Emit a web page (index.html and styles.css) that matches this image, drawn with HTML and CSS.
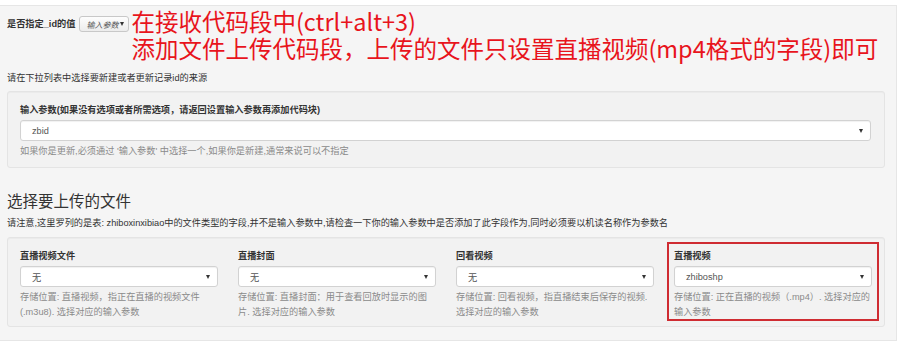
FILE: index.html
```html
<!DOCTYPE html>
<html lang="zh-CN">

<head>
    <meta charset="UTF-8">
    <title>文件上传设置</title>
    <link rel="stylesheet" href="styles.css">
</head>

<body>

    <div class="panel">

        <div class="top-row">
            <span class="top-label">是否指定_id的值</span>
            <span class="mini-select">输入参数 <i class="caret"></i></span>
            <div class="note-red">
                在接收代码段中(ctrl+alt+3)<br>
                添加文件上传代码段，上传的文件只设置直播视频(mp4格式的字段)即可
            </div>
        </div>

        <p class="tip">请在下拉列表中选择要新建或者更新记录id的来源</p>

        <div class="well well-one">
            <label class="field-label">输入参数(如果没有选项或者所需选项，请返回设置输入参数再添加代码块)</label>
            <div class="select-box">zbid <i class="caret"></i></div>
            <p class="help">如果你是更新,必须通过 '输入参数' 中选择一个,如果你是新建,通常来说可以不指定</p>
        </div>

        <h3 class="section-title">选择要上传的文件</h3>
        <p class="tip">请注意,这里罗列的是表: zhiboxinxibiao中的文件类型的字段,并不是输入参数中,请检查一下你的输入参数中是否添加了此字段作为,同时必须要以机读名称作为参数名</p>

        <div class="well well-two">
            <div class="file-grid">
                <div class="file-col">
                    <label class="field-label">直播视频文件</label>
                    <div class="select-box">无 <i class="caret"></i></div>
                    <p class="help">存储位置: 直播视频，指正在直播的视频文件(.m3u8). 选择对应的输入参数</p>
                </div>
                <div class="file-col">
                    <label class="field-label">直播封面</label>
                    <div class="select-box">无 <i class="caret"></i></div>
                    <p class="help">存储位置: 直播封面：用于查看回放时显示的图片. 选择对应的输入参数</p>
                </div>
                <div class="file-col">
                    <label class="field-label">回看视频</label>
                    <div class="select-box">无 <i class="caret"></i></div>
                    <p class="help">存储位置: 回看视频，指直播结束后保存的视频. 选择对应的输入参数</p>
                </div>
                <div class="file-col marked">
                    <label class="field-label">直播视频</label>
                    <div class="select-box">zhiboshp <i class="caret"></i></div>
                    <p class="help">存储位置: 正在直播的视频（.mp4）. 选择对应的输入参数</p>
                </div>
            </div>
        </div>

    </div>

</body>

</html>
```

FILE: styles.css
```css
* {
    margin: 0;
    padding: 0;
    box-sizing: border-box;
}

body {
    background-color: white;
    font-family: "Liberation Sans", "Noto Sans CJK SC", sans-serif;
    font-size: 9.2px;
    color: #333;
}

.panel {
    margin-top: 5px;
    width: 897px;
    height: 336px;
    background-color: #f5f5f5;
    border: 1px solid #e6e6e6;
    border-left: none;
    padding: 2px 11px 0 7px;
}

.top-row {
    display: flex;
    align-items: flex-start;
}

.top-label {
    font-weight: bold;
    line-height: 14px;
    margin-top: 9px;
}

.mini-select {
    display: flex;
    flex-shrink: 0;
    align-items: center;
    justify-content: space-between;
    width: 50px;
    height: 16px;
    margin: 8px 2px 0 4px;
    padding: 0 4px 0 6px;
    background: linear-gradient(#fdfdfd, #ececec);
    border: 1px solid #c8c8c8;
    border-radius: 3px;
    color: #555;
    font-size: 8px;
    font-style: italic;
    white-space: nowrap;
}

.mini-select .caret {
    border-top-width: 4px;
    border-left-width: 2.5px;
    border-right-width: 2.5px;
}

.note-red {
    color: #e8141c;
    font-family: "Noto Sans CJK SC", sans-serif;
    font-size: 23.5px;
    line-height: 27px;
}

.tip {
    line-height: 14px;
    margin-top: 9px;
}

.well {
    background-color: #f2f2f2;
    border: 1px solid #e4e4e4;
    border-radius: 3px;
    box-shadow: inset 0 1px 1px rgba(0, 0, 0, 0.03);
}

.well-one {
    margin-top: 6px;
    padding: 11px 13px 8px 12px;
}

.field-label {
    display: block;
    font-weight: bold;
    line-height: 14px;
}

.select-box {
    display: flex;
    align-items: center;
    justify-content: space-between;
    height: 21px;
    margin-top: 3px;
    padding: 0 7px 0 11px;
    background-color: white;
    border: 1px solid #d2d2d2;
    border-radius: 3px;
    box-shadow: inset 0 1px 1px rgba(0, 0, 0, 0.06);
    color: #555;
}

.caret {
    display: inline-block;
    width: 0;
    height: 0;
    border-top: 4px solid #333;
    border-left: 2.5px solid transparent;
    border-right: 2.5px solid transparent;
}

.help {
    margin-top: 3px;
    line-height: 15px;
    color: #8a8a8a;
}

.section-title {
    margin-top: 24px;
    font-size: 15.5px;
    font-weight: normal;
    line-height: 20px;
    color: #333;
}

.section-title + .tip {
    margin-top: 4px;
}

.well-two {
    margin-top: 7px;
    padding: 11px 12px 6px 12px;
}

.file-grid {
    display: grid;
    grid-template-columns: repeat(4, 198px);
    gap: 20px;
}

.file-col {
    position: relative;
}

.marked::after {
    content: "";
    position: absolute;
    top: -7px;
    left: -7px;
    right: -7px;
    bottom: -1px;
    border: 2px solid #cf2c32;
}
```
